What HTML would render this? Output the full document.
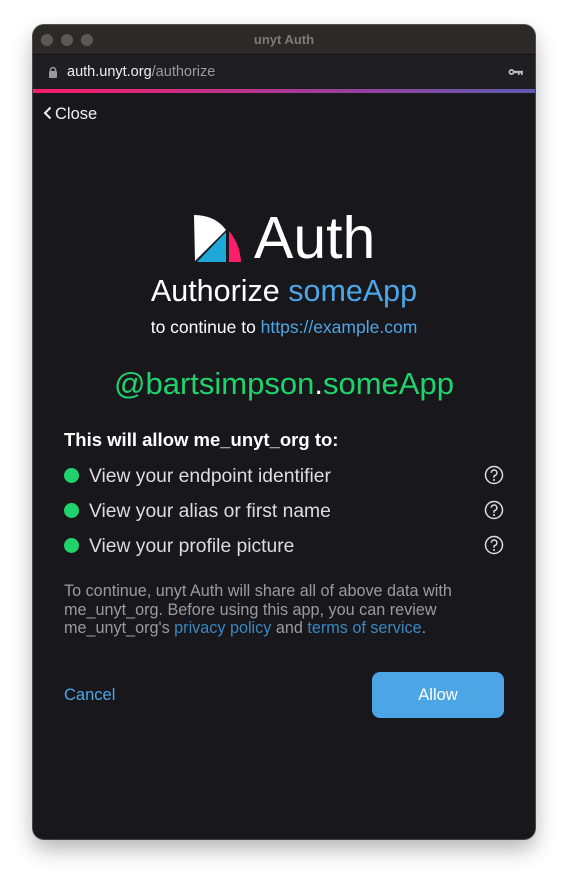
<!DOCTYPE html>
<html><head><style>
*{margin:0;padding:0;box-sizing:border-box}
body{width:568px;height:880px;background:#fff;font-family:"Liberation Sans",sans-serif;position:relative;overflow:hidden}
.win{position:absolute;left:33px;top:25px;width:502px;height:814px;border-radius:11px;background:#18171c;overflow:hidden;box-shadow:0 10px 22px rgba(0,0,0,.3),0 0 0 1px #555;}
.title{height:30px;background:#2b2a28;border-bottom:1px solid #111;position:relative;color:#7c7b78;font-weight:bold;font-size:13px;text-align:center;line-height:30px}
.dot{position:absolute;top:9px;width:12px;height:12px;border-radius:50%;background:#5a5957}
.addr{height:34px;background:#1f1f23;position:relative;font-size:14.5px;line-height:34px;color:#f0f0f0;padding-left:34px}
.grad{height:4px;background:linear-gradient(90deg,#fe1d6b,#a43a98 55%,#5d5bb0)}
.abs{position:absolute}
.li{white-space:nowrap}
</style></head><body>
<div class="win">
 <div class="title"><span class="dot" style="left:8px"></span><span class="dot" style="left:28px"></span><span class="dot" style="left:48px"></span>unyt Auth</div>
 <div class="addr">
  <svg class="abs" style="left:15px;top:11px" width="10" height="12" viewBox="0 0 10 12"><rect x="1" y="5" width="8" height="7" rx="1" fill="#9a9a9a"/><path d="M2.5 5.5V4a2.5 2.5 0 0 1 5 0v1.5" stroke="#9a9a9a" stroke-width="1.5" fill="none"/></svg>
  auth.unyt.org<span style="color:#9b9b9b">/authorize</span>
  <svg class="abs" style="right:12px;top:13px" width="15" height="8" viewBox="0 0 15 8"><circle cx="3.5" cy="4" r="3" fill="#bbb"/><circle cx="3.5" cy="4" r="1.2" fill="#1f1f23"/><rect x="6" y="2.8" width="9" height="2.4" fill="#bbb"/><rect x="10" y="4" width="1.6" height="3" fill="#bbb"/><rect x="13" y="4" width="1.6" height="3" fill="#bbb"/></svg>
 </div>
 <div class="grad"></div>
 <div class="abs" style="left:10px;top:80px;color:#eee;font-size:16.5px">
  <svg style="vertical-align:-1px;margin-right:3px" width="9" height="14" viewBox="0 0 9 14"><path d="M7.5 1.5L2 7l5.5 5.5" stroke="#eee" stroke-width="2" fill="none"/></svg>Close</div>
 <svg class="abs" style="left:160px;top:189px" width="50" height="49" viewBox="0 0 50 49">
  <path d="M1 1Q22 1 33 16L2 47Z" fill="#fff"/>
  <path d="M4 48L33 18L33 48Z" fill="#1ea8d8"/>
  <path d="M36 17Q47 30 48 48L36 48Z" fill="#fe1d6b"/>
 </svg>
 <div class="abs" style="left:221px;top:178px;color:#fff;font-size:59px;line-height:70px">Auth</div>
 <div class="abs" style="left:0;width:502px;top:249px;text-align:center;color:#fff;font-size:30.5px;white-space:nowrap">Authorize <span style="color:#4da6e6">someApp</span></div>
 <div class="abs" style="left:0;width:502px;top:292px;text-align:center;color:#fff;font-size:17.5px">to continue to <span style="color:#4da6e6">https://example.com</span></div>
 <div class="abs" style="left:0;width:502px;top:341px;text-align:center;color:#1fd26b;font-size:31px;white-space:nowrap">@bartsimpson<span style="color:#fff">.</span>someApp</div>
 <div class="abs" style="left:31px;top:404px;color:#fff;font-size:18.5px;font-weight:bold;white-space:nowrap">This will allow me_unyt_org to:</div>
 <div class="abs" style="left:31px;top:434px;font-size:19.3px;color:#ddd;line-height:35px">
  <div class="li"><span style="display:inline-block;width:15px;height:15px;border-radius:50%;background:#1fd26b;vertical-align:-1px;margin-right:10px"></span>View your endpoint identifier</div>
  <div class="li"><span style="display:inline-block;width:15px;height:15px;border-radius:50%;background:#1fd26b;vertical-align:-1px;margin-right:10px"></span>View your alias or first name</div>
  <div class="li"><span style="display:inline-block;width:15px;height:15px;border-radius:50%;background:#1fd26b;vertical-align:-1px;margin-right:10px"></span>View your profile picture</div>
 </div>
 <svg class="abs" style="left:451px;top:439px" width="20" height="105" viewBox="0 0 20 105">
  <g fill="none" stroke="#ddd" stroke-width="1.5">
   <circle cx="10" cy="11" r="8.5"/><circle cx="10" cy="46" r="8.5"/><circle cx="10" cy="81" r="8.5"/>
   <path d="M7.3 8.8a2.8 2.8 0 1 1 3.5 2.7c-.6.2-.8.7-.8 1.3v1"/><path d="M7.3 43.8a2.8 2.8 0 1 1 3.5 2.7c-.6.2-.8.7-.8 1.3v1"/><path d="M7.3 78.8a2.8 2.8 0 1 1 3.5 2.7c-.6.2-.8.7-.8 1.3v1"/>
  </g>
  <g fill="#ddd"><circle cx="10" cy="16" r="1"/><circle cx="10" cy="51" r="1"/><circle cx="10" cy="86" r="1"/></g>
 </svg>
 <div class="abs" style="left:31px;top:557px;width:450px;color:#9b9b9f;font-size:16.2px;line-height:18.5px">To continue, unyt Auth will share all of above data with me_unyt_org. Before using this app, you can review me_unyt_org's <span style="color:#3a87c0">privacy policy</span> and <span style="color:#3a87c0">terms of service</span>.</div>
 <div class="abs" style="left:31px;top:661px;color:#4da6e6;font-size:16.5px">Cancel</div>
 <div class="abs" style="left:339px;top:647px;width:132px;height:46px;border-radius:8px;background:#4ca5e5;color:#fff;font-size:16.5px;text-align:center;line-height:46px">Allow</div>
</div>
</body></html>
